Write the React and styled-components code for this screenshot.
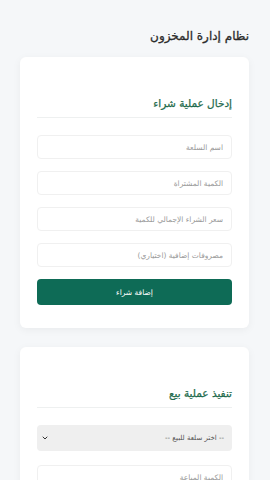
import React, { useState } from "react";
import styled, { createGlobalStyle } from "styled-components";

const GlobalStyle = createGlobalStyle`
  html, body {
    margin: 0;
    padding: 0;
    background: #f5f7f9;
    font-family: "DejaVu Sans", "Noto Sans", sans-serif;
  }
  * { box-sizing: border-box; }
`;

const Page = styled.div`
  direction: rtl;
  padding: 26px 21px 20px 20px;
  display: flex;
  flex-direction: column;
  gap: 19px;
`;

const Title = styled.h1`
  margin: 0 0 -8px;
  font-size: 12px;
  line-height: 20px;
  font-weight: 400;
  color: #2b2b2b;
  -webkit-text-stroke: 0.3px #2b2b2b;
`;

const Card = styled.section`
  background: #fff;
  border-radius: 6px;
  box-shadow: 0 2px 8px rgba(0, 0, 0, 0.05);
  padding: 36px 17px 23px;
  display: flex;
  flex-direction: column;
`;

const Heading = styled.h2`
  margin: 0 0 17px;
  font-size: 10.5px;
  line-height: 20px;
  font-weight: 400;
  color: #1f6b4d;
  -webkit-text-stroke: 0.25px #1f6b4d;
  padding-bottom: 4px;
  border-bottom: 1px solid #eef0f0;
`;

const Form = styled.div`
  display: flex;
  flex-direction: column;
  gap: ${(p) => p.$gap || 12}px;
`;

const Input = styled.input`
  height: 24px;
  border: 1px solid #f0f0f0;
  border-radius: 4px;
  padding: 0 8px;
  font-family: inherit;
  font-size: 7.5px;
  color: #333;
  background: #fff;
  outline: none;
  &::placeholder { color: #999; }
`;

const SelectBox = styled.div`
  height: 26px;
  background: #efefef;
  border-radius: 4px;
  display: flex;
  align-items: center;
  justify-content: space-between;
  padding: 0 8px 0 4px;
  font-size: 7px;
  color: #555;
`;

const Button = styled.button`
  height: 26px;
  border: none;
  border-radius: 4px;
  background: #0e6b56;
  color: #fff;
  font-family: inherit;
  font-size: 7.5px;
  font-weight: 400;
  cursor: pointer;
`;

const Chevron = () => (
  <svg width="8" height="8" viewBox="0 0 24 24" fill="none" stroke="#333" strokeWidth="3" strokeLinecap="round" strokeLinejoin="round">
    <path d="M6 9l6 6 6-6" />
  </svg>
);

export default function App() {
  const [item, setItem] = useState("");
  return (
    <>
      <GlobalStyle />
      <Page>
        <Title>نظام إدارة المخزون</Title>
        <Card>
          <Heading>إدخال عملية شراء</Heading>
          <Form>
            <Input placeholder="اسم السلعة" />
            <Input placeholder="الكمية المشتراة" />
            <Input placeholder="سعر الشراء الإجمالي للكمية" />
            <Input placeholder="مصروفات إضافية (اختياري)" />
            <Button>إضافة شراء</Button>
          </Form>
        </Card>
        <Card>
          <Heading>تنفيذ عملية بيع</Heading>
          <Form $gap={14}>
            <SelectBox onClick={() => setItem(item)}>
              <span>-- اختر سلعة للبيع --</span>
              <Chevron />
            </SelectBox>
            <Input placeholder="الكمية المباعة" />
            <Input placeholder="سعر البيع" />
          </Form>
        </Card>
      </Page>
    </>
  );
}
